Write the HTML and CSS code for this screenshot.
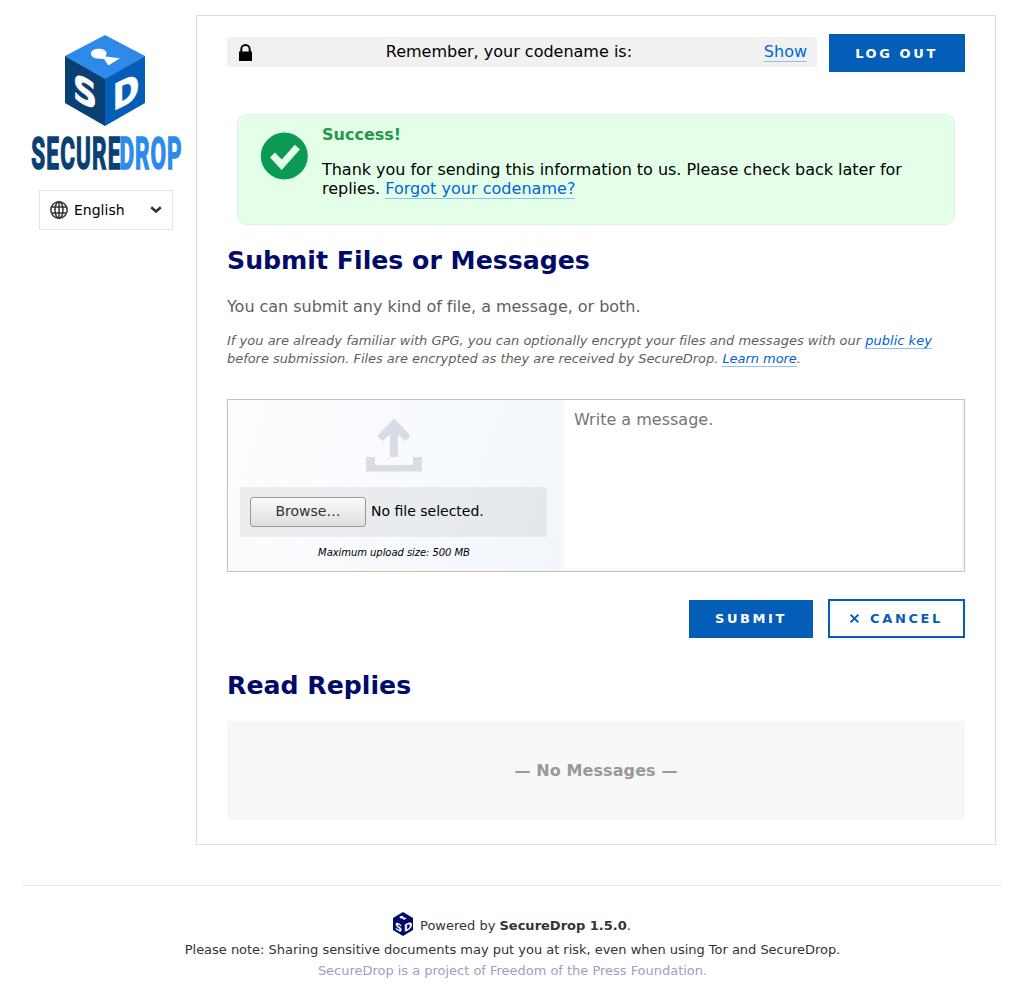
FILE: index.html
```
<!DOCTYPE html>
<html lang="en">
<head>
<meta charset="utf-8">
<title>SecureDrop</title>
<link rel="stylesheet" href="styles.css">
</head>
<body>
<div class="page">
  <aside class="side">
    <svg class="logo" width="160" height="142" viewBox="26 34 160 142" role="img" aria-label="SecureDrop">
      <path fill="#2d8aea" d="M105 35 145 56 105 79.500 65 56z"/>
      <path fill="#0a3f73" d="M65 56 105 79v47L65 103z"/>
      <path fill="#045eb7" d="M145 56 105 79v47l40-23z"/>
      <path fill="#fff" d="M91 53.500c0-3 3.500-4.800 7.700-4.800 4.500 0 7.800 2 7.800 4.500 0 1.400-.5 2.300-1.200 3.200l14.700 1.800-11.700 7.300-4.300-6.800c-1.600.4-3.500.3-5-.1-4.500.2-8-1.600-8-5.100z"/>
      <text class="cube-letter" transform="matrix(1 .5 0 1 73 98.500)" textLength="24" lengthAdjust="spacingAndGlyphs">S</text>
      <text class="cube-letter" transform="matrix(1 -.5 0 1 112.800 111.300)" textLength="26.500" lengthAdjust="spacingAndGlyphs">D</text>
      <text class="wordmark navy" transform="translate(31.300 169.300) scale(.5 1)" textLength="178" lengthAdjust="spacing">SECURE</text>
      <text class="wordmark sky" transform="translate(119.500 169.300) scale(.5 1)" textLength="124" lengthAdjust="spacing">DROP</text>
    </svg>
    <div class="language">
      <svg width="18" height="18" viewBox="0 0 18 18" fill="none" stroke="#333" stroke-width="1.500"><circle cx="9" cy="9" r="8.200"/><ellipse cx="9" cy="9" rx="4" ry="8.200"/><path d="M9 1v16M2 6h14M2 12h14"/></svg>
      <span>English</span>
      <svg class="chevron" width="12" height="8" viewBox="0 0 12 8" fill="none" stroke="#333" stroke-width="2.600"><path d="M1.200 1.200 6 5.500l4.800-4.300"/></svg>
    </div>
  </aside>

  <main class="card">
    <div class="topbar">
      <div class="codename">
        <svg class="lock" width="13" height="17" viewBox="0 0 13 17"><path d="M0 7.500h13V17H0z"/><path d="M2.300 8V5.300a4.200 4.200 0 0 1 8.400 0V8" fill="none" stroke="#000" stroke-width="2"/></svg>
        <span>Remember, your codename is:</span>
        <a href="#">Show</a>
      </div>
      <button class="btn logout">LOG OUT</button>
    </div>

    <section class="flash">
      <svg width="48" height="48" viewBox="0 0 48 48"><circle cx="24.300" cy="24" r="23.500" fill="#0a9a56"/><path d="M10 25.500l4.800-4.900 7 7L34.800 12.800l5.200 4.500L21.700 38z" fill="#e4ffe8"/></svg>
      <div>
        <strong>Success!</strong>
        <p>Thank you for sending this information to us. Please check back later for replies. <a href="#">Forgot your codename?</a></p>
      </div>
    </section>

    <h2>Submit Files or Messages</h2>
    <p class="lead">You can submit any kind of file, a message, or both.</p>
    <p class="hint">If you are already familiar with GPG, you can optionally encrypt your files and messages with our <a href="#">public key</a> <span class="tight">before submission. Files are encrypted as they are received by SecureDrop. <a href="#">Learn more</a>.</span></p>

    <div class="snippet">
      <div class="upload">
        <svg width="56" height="53" viewBox="0 0 56 53" fill="#d9dce5"><path d="M28 .5 44.500 17.500l-5 5.800L32 16.500V39h-8V16.500l-7.500 6.800-5-5.800z"/><path d="M0 39h9v8h38v-8h9v14.500H0z"/></svg>
        <div class="file-row"><button class="browse">Browse…</button><span>No file selected.</span></div>
        <em>Maximum upload size: 500 MB</em>
      </div>
      <div class="message"><textarea placeholder="Write a message."></textarea></div>
    </div>

    <div class="actions">
      <button class="btn submit">SUBMIT</button>
      <button class="btn cancel"><svg width="9" height="9" viewBox="0 0 9 9" stroke="#045eb7" stroke-width="2"><path d="M.6.6l7.800 7.800M8.400.6.600 8.400"/></svg>CANCEL</button>
    </div>

    <h2 class="replies-title">Read Replies</h2>
    <div class="replies">— No Messages —</div>
  </main>

  <footer>
    <p class="powered">
      <svg width="20" height="24" viewBox="0 0 20 24"><path fill="#000a68" d="M10 0 20 6v12l-10 6L0 18V6z"/><path fill="#fff" d="M6.500 4.500l3-.7 1.300 1.700 3 .5-2.800 2-1.500-1.500-2.500-.3z"/><text class="mini-letter" transform="matrix(1 .5 0 1 2 17)">S</text><text class="mini-letter" transform="matrix(1 -.5 0 1 11 20.300)">D</text></svg>
      <span>Powered by <b>SecureDrop 1.5.0</b>.</span>
    </p>
    <p class="note">Please note: Sharing sensitive documents may put you at risk, even when using Tor and SecureDrop.</p>
    <p class="project">SecureDrop is a project of Freedom of the Press Foundation.</p>
  </footer>
</div>
</body>
</html>
```
FILE: styles.css
```
* { box-sizing: border-box; }
body { margin: 0; background: #fff; color: #000; font: 16px/19px "DejaVu Sans", sans-serif; }
p, h2 { margin: 0; }
svg { display: block; flex: none; overflow: visible; }
button, textarea { font-family: inherit; }
a { color: #0065db; text-decoration: none; border-bottom: 1px solid #8bc0f5; }

.page { display: grid; grid-template-columns: 174px 800px; padding: 15px 22px 0; height: 989px; align-content: start; }
.side { padding-top: 19px; }
.logo { margin-left: 4px; }
.cube-letter { font: 700 36px "DejaVu Sans", sans-serif; fill: #fff; stroke: #fff; stroke-width: .8; }
.mini-letter { font: 700 10px "DejaVu Sans", sans-serif; fill: #fff; }
.wordmark { font: 700 45px Roboto, sans-serif; stroke-width: 1.6; }
.navy { fill: #0a3f73; stroke: #0a3f73; }
.sky { fill: #2d8aea; stroke: #2d8aea; }
.language { display: flex; align-items: center; width: 134px; height: 40px; margin: 14px 0 0 17px; padding: 0 10px; border: 1px solid #e6e6e6; font-size: 14px; gap: 6px; }
.chevron { margin-left: auto; }

.card { height: 830px; padding: 18px 30px 0; border: 1px solid #ddd; }
.topbar { display: flex; align-items: flex-start; gap: 12px; height: 38px; }
.codename { display: flex; align-items: center; justify-content: space-between; width: 590px; height: 30px; margin-top: 3px; padding: 0 10px 1px 12px; background: #f1f1f1; }
.codename span { padding: 0 0 1px 2px; }
.lock { margin-top: 1px; }
.btn { height: 38px; border: 0; padding: 0; background: #045eb7; color: #fff; font-size: 13px; font-weight: bold; letter-spacing: 2.6px; }
.logout { width: 136px; padding-right: 1px; }

.flash { display: flex; gap: 14px; height: 111px; margin: 42px 10px 0; padding: 10px 40px 0 22px; border: 1px solid #dcf3e0; border-radius: 10px; background: #e4ffe8; }
.flash svg { margin-top: 7px; }
.flash strong { display: block; color: #27954a; }
.flash p { margin-top: 16px; letter-spacing: -.025px; }
.flash a { letter-spacing: .03px; }

h2 { margin-top: 21px; color: #000a68; font-size: 25.2px; line-height: 30px; }
.lead { margin-top: 21px; color: #5f5f5f; letter-spacing: -.03px; }
.hint { margin-top: 16px; color: #5f5f5f; font-size: 13px; line-height: 18px; font-style: italic; letter-spacing: .01px; }
.tight { letter-spacing: -.05px; }

.snippet { display: flex; height: 173px; margin-top: 31px; border: 1px solid #c0c0c0; }
.upload { display: flex; flex-direction: column; align-items: center; width: 332px; padding-top: 18px; background: linear-gradient(110deg, #fdfdff, #f7fafd 60%, #f2f6fb); }
.file-row { display: flex; align-items: center; gap: 5px; width: 307px; height: 50px; margin: 16px 1px 0 0; padding-left: 10px; background: rgba(0,0,0,.06); font-size: 14px; }
.file-row span { padding-bottom: 1px; }
.browse { width: 116px; height: 30px; padding: 0 0 2px; border: 1px solid #999; border-radius: 3px; background: linear-gradient(#fafafa, #dedede); color: #2e3436; font-size: 14px; }
.upload em { margin-top: 6px; font-size: 10px; letter-spacing: -.06px; }
.message { flex: 1; padding: 0 2px 3px 4px; background: #f8f8f8; }
textarea { display: block; width: 100%; height: 168px; border: 0; padding: 10px; resize: none; background: #fff; font-size: 16px; line-height: 19px; }
textarea::placeholder { color: #757575; }

.actions { display: flex; justify-content: flex-end; align-items: flex-end; gap: 15px; height: 39px; margin-top: 27px; }
.submit { width: 124px; padding-bottom: 1px; }
.cancel { display: flex; align-items: center; justify-content: center; gap: 11px; width: 137px; height: 39px; border: 2px solid #045eb7; background: #fff; color: #045eb7; }
.replies-title { margin-top: 33px; }
.replies { display: flex; align-items: center; justify-content: center; height: 99px; margin-top: 20px; background: #f7f7f7; color: #999; font-weight: bold; letter-spacing: .1px; }

footer { grid-column: 1 / -1; width: 980px; margin-top: 40px; padding-top: 26px; border-top: 1px solid #e8e8e8; text-align: center; font-size: 13px; color: #333; }
.powered { display: flex; justify-content: center; gap: 7px; height: 24px; }
.powered span { padding-top: 4px; }
.note { margin-top: 4px; padding-left: 1px; letter-spacing: -.025px; }
.project { margin-top: 2px; padding-left: 1px; color: #a39dbe; letter-spacing: -.02px; }
```
